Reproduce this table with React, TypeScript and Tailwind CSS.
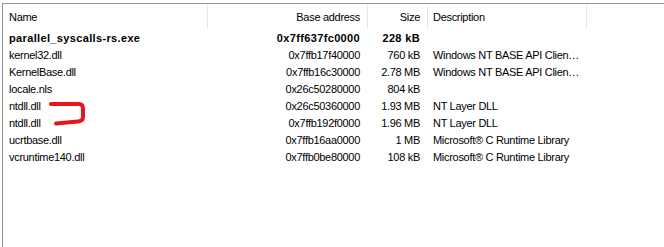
import React from 'react';

type Module = {
  name: string;
  base: string;
  size: string;
  description: string;
  bold?: boolean;
};

const modules: Module[] = [
  { name: 'parallel_syscalls-rs.exe', base: '0x7ff637fc0000', size: '228 kB', description: '', bold: true },
  { name: 'kernel32.dll', base: '0x7ffb17f40000', size: '760 kB', description: 'Windows NT BASE API Clien…' },
  { name: 'KernelBase.dll', base: '0x7ffb16c30000', size: '2.78 MB', description: 'Windows NT BASE API Clien…' },
  { name: 'locale.nls', base: '0x26c50280000', size: '804 kB', description: '' },
  { name: 'ntdll.dll', base: '0x26c50360000', size: '1.93 MB', description: 'NT Layer DLL' },
  { name: 'ntdll.dll', base: '0x7ffb192f0000', size: '1.96 MB', description: 'NT Layer DLL' },
  { name: 'ucrtbase.dll', base: '0x7ffb16aa0000', size: '1 MB', description: 'Microsoft® C Runtime Library' },
  { name: 'vcruntime140.dll', base: '0x7ffb0be80000', size: '108 kB', description: 'Microsoft® C Runtime Library' },
];

const cols = 'grid grid-cols-[205px_160px_60px_159px]';

export default function App() {
  return (
    <div
      className="relative w-[664px] h-[247px] bg-white pt-[3px] pl-[2px] overflow-hidden text-[11px] text-black tracking-[-0.3px]"
      style={{ fontFamily: '"Liberation Sans", Arial, sans-serif' }}
    >
      <div className="h-full border-l border-t border-[#939393]">
        {/* Header */}
        <div className={`${cols} h-[26px] items-center`}>
          <div className="h-[24px] flex items-center pl-[6px] border-r border-[#e5e5e5]">Name</div>
          <div className="h-[24px] flex items-center justify-end pr-[7px] border-r border-[#e5e5e5]">Base address</div>
          <div className="h-[24px] flex items-center justify-end pr-[7px] border-r border-[#e5e5e5]">Size</div>
          <div className="h-[24px] flex items-center pl-[5px] border-r border-[#e5e5e5]">Description</div>
        </div>

        {/* Rows */}
        {modules.map((m, i) => (
          <div
            key={i}
            className={`${cols} h-[17px] items-center ${m.bold ? 'font-bold tracking-[0.35px]' : ''}`}
          >
            <div className="pl-[6px] whitespace-nowrap">{m.name}</div>
            <div className="text-right pr-[8px] whitespace-nowrap">{m.base}</div>
            <div className="text-right pr-[8px] whitespace-nowrap">{m.size}</div>
            <div className="pl-[5px] whitespace-nowrap overflow-hidden">{m.description}</div>
          </div>
        ))}
      </div>

      {/* red marker drawn over the list */}
      <svg className="absolute left-0 top-0 pointer-events-none" width="664" height="247">
        <path
          d="M51 104 L79 104 Q83 104 83 109 L83 117 Q83 121 78 121.5 L56 123.5"
          fill="none"
          stroke="#e8151d"
          strokeWidth="4"
          strokeLinecap="round"
          strokeLinejoin="round"
        />
      </svg>
    </div>
  );
}
